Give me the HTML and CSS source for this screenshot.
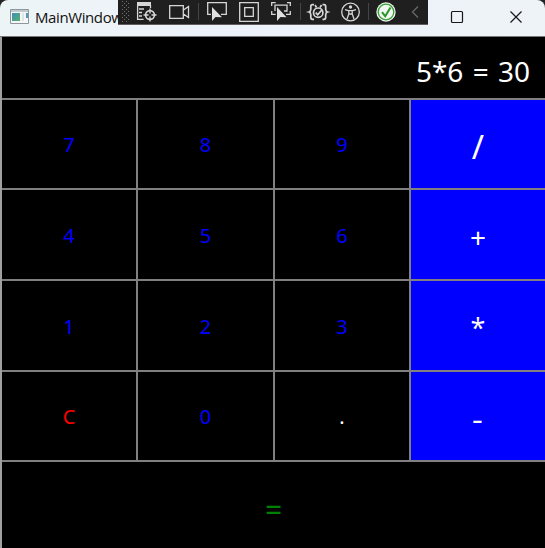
FILE: index.html
```html
<!DOCTYPE html>
<html lang="en">
<head>
<meta charset="utf-8">
<title>MainWindow</title>
<link rel="stylesheet" href="styles.css">
</head>
<body>
<div class="window">
  <header class="titlebar">
    <svg class="app-icon" width="20" height="16" viewBox="0 0 20 16">
      <path d="M.5.5h18v14H.5z" fill="#f5f6f7" stroke="#8d979e"/>
      <path d="M1 1h17v2H1z" fill="#c3cace"/>
      <defs><linearGradient id="app" x1="0" y1="0" x2="1" y2="1"><stop stop-color="#438bb8"/><stop offset="1" stop-color="#55b36b"/></linearGradient></defs>
      <path d="M2 4h8v8H2z" fill="url(#app)"/>
      <path d="M12 4h2v8h-2z" fill="#e0e4e7"/><path d="M16 4h2v5h-2z" fill="#5799bd"/>
    </svg>
    <span class="title">MainWindow</span>
    <div class="caption">
      <svg width="59" height="36" viewBox="0 0 59 36" fill="none" stroke="#171717" stroke-width="1.2"><rect x="24.5" y="11.5" width="11" height="11" rx="1"/></svg>
      <svg width="59" height="36" viewBox="0 0 59 36" fill="none" stroke="#171717" stroke-width="1.2"><path d="m24.5 11.5 11 11m0-11-11 11"/></svg>
    </div>
  </header>
  <div class="debugbar">
    <svg width="310" height="25" viewBox="118 0 310 25" fill="none" stroke="#d6d6d6" stroke-width="1.3">
      <defs><pattern id="grip" x="122" y="1" width="4" height="4" patternUnits="userSpaceOnUse"><path d="M0 0h1v1H0zM2 2h1v1H2z" fill="#707070" stroke="none"/></pattern></defs>
      <path d="M122 1h7v22h-7z" fill="url(#grip)" stroke="none"/>
      <path d="M137 2h14v4h-14z" fill="#d6d6d6" stroke="none"/>
      <path d="M137.6 5v14.4h6M139 9h5M139 12.5h3M139 16h3M150.5 5v3"/>
      <circle cx="150" cy="15" r="4.4" stroke-width="1.6"/><path d="M150 8.5v5m0 3v5M143.5 15h5m3 0h5"/>
      <path d="M169.7 5.7h13.6v12.6h-13.6zM183.5 10l5-3.5v11l-5-3.5"/>
      <path d="M198.5 3v17M300.5 3v17M368.5 3v17" stroke="#454545" stroke-width="1"/>
      <path d="M211 14.3h-3.3V2.7h18.6v11.6H221"/>
      <path d="M212 7v14l3.5-4 6.5.2z" fill="#e0e0e0" stroke="none"/>
      <path d="M239.7 2.7h18.6v18.6h-18.6zM244.7 7.7h8.6v8.6h-8.6z"/>
      <path d="M271.7 6V2.7h4M287 2.7h3.3V6M271.7 11v3.3h4M286 14.3h4.3V11M275 11V5.2h12V11h-3"/>
      <path d="M277 7v14l3.5-4 6 .2z" fill="#e0e0e0" stroke="none"/>
      <path d="M314 4.7h-1.5q-1.7 0-1.7 2v2.5q0 2.3-1.8 2.8 1.8.5 1.8 2.8v2.5q0 2 1.7 2h1.5M322.500 4.700h1.5q1.700 0 1.700 2v2.500q0 2.300 1.800 2.800-1.800.5-1.800 2.800v2.500q0 2-1.700 2h-1.500" stroke-width="1.7"/>
      <circle cx="318.200" cy="12.700" r="4.700" stroke-width="1.7"/><path d="m315.700 12.700 2 2 4.300-5M315 5l1.500 2.500M321.500 5 320 7.500" stroke-width="1.7"/>
      <circle cx="350.5" cy="12" r="8.8"/><circle cx="350.5" cy="7" r="1.7" fill="#d6d6d6" stroke="none"/>
      <path d="M345 9.7l3.5 1h4l3.5-1M348.8 11v3l-1.8 5M352.2 11v3l1.8 5M348.8 14h3.4"/>
      <circle cx="386" cy="12" r="9.7" fill="#f3f5f3" stroke="none"/><circle cx="386" cy="12" r="7.8" stroke="#37a237"/>
      <path d="m382 12.2 3.2 4 5.3-8.8" stroke="#279827" stroke-width="2"/>
      <path d="m418 6.5-5.5 5.5 5.5 5.5" stroke="#686868"/>
    </svg>
  </div>
  <main class="calculator">
    <output class="display">5*6 = 30</output>
    <button>7</button><button>8</button><button>9</button><button class="op slash">/</button>
    <button>4</button><button>5</button><button>6</button><button class="op">+</button>
    <button>1</button><button>2</button><button>3</button><button class="op star">*</button>
    <button class="clear">C</button><button>0</button><button class="dot">.</button><button class="op minus"><span>-</span></button>
    <button class="equals">=</button>
  </main>
</div>
</body>
</html>
```
FILE: styles.css
```css
* { box-sizing: border-box; }
body { margin: 0; background: #232323; overflow: hidden; }
.window {
  position: relative;
  width: 545px;
  height: 548px;
  font-family: "Noto Sans", "Open Sans", sans-serif;
}
.titlebar {
  display: flex;
  align-items: center;
  height: 37px;
  padding-left: 10px;
  background: linear-gradient(90deg, #edf4f6, #edf2fb 50%, #eef3f7);
  border-bottom: 1px solid #777;
  border-radius: 8px 8px 0 0;
}
.app-icon { margin-top: -3px; }
.title {
  margin: -2px 0 0 5px;
  font: 15px/20px "Open Sans", sans-serif;
  letter-spacing: -.4px;
  color: #111;
}
.caption { display: flex; height: 36px; margin-left: auto; }
.debugbar {
  position: absolute;
  top: 0;
  left: 118px;
  width: 310px;
  height: 25px;
  background: #1f1f1f;
  border-bottom: 1px solid #625c5f;
  overflow: hidden;
}
.debugbar svg { display: block; }
.calculator {
  display: grid;
  grid-template-columns: 134px 135px 134px 134px;
  grid-template-rows: 61px 88px 89px 89px 88px 86px;
  gap: 2px;
  height: 511px;
  background: #808080;
  border-left: 2px solid #a0a0a0;
}
.display {
  grid-column: 1 / -1;
  padding: 9px 15px 0 0;
  background: #000;
  color: #fff;
  font-size: 28px;
  line-height: 50px;
  word-spacing: 2px;
  text-align: right;
}
button {
  border: 0;
  padding: 1px 0 0;
  background: #000;
  color: #00f;
  font-family: inherit;
  font-size: 20px;
}
.op { background: #00f; color: #fff; font-size: 28px; padding: 5px 0 0; }
.slash { font-size: 33px; padding-top: 4px; }
.star { font: 27px "Open Sans", sans-serif; padding-top: 4px; }
.minus { font-size: 28px; padding-top: 3px; }
.minus span { display: inline-block; transform: scaleX(1.2); }
.clear { color: #f00; }
.dot { color: #fff; }
.equals { grid-column: 1 / -1; color: #008000; font-size: 30px; padding: 9px 0 0; }
```
